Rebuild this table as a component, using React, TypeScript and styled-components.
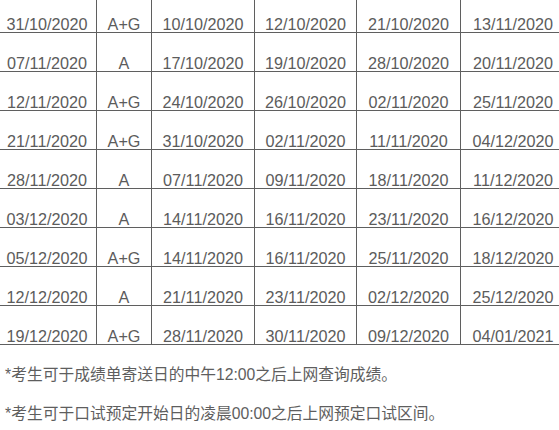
import React from "react";
import styled, { createGlobalStyle } from "styled-components";

const Global = createGlobalStyle`
  html, body { margin: 0; padding: 0; background: #fff; }
  body { width: 559px; height: 430px; overflow: hidden; }
`;

const Page = styled.div`
  width: 559px;
  height: 430px;
  overflow: hidden;
  background: #fff;
  font-family: "Liberation Sans", Arial, "Noto Sans CJK SC", sans-serif;
`;

const Grid = styled.div`
  display: grid;
  grid-template-columns: 99px 55px 103px 102px 104px 105px;
  margin: -7px 0 0 -3px;
  width: max-content;
  border-top: 1px solid #5f5f5f;
  border-left: 1px solid #5f5f5f;
`;

const Cell = styled.div`
  box-sizing: border-box;
  height: 39px;
  border-right: 1px solid #5f5f5f;
  border-bottom: 1px solid #5f5f5f;
  display: flex;
  align-items: flex-end;
  justify-content: center;
  font-size: 16.2px;
  line-height: 16px;
  color: #5c5c5c;
  white-space: nowrap;
`;

const Notes = styled.div`
  padding: 10px 0 0 5px;
`;

const Note = styled.p`
  margin: 0;
  font-size: 15.75px;
  line-height: 39px;
  color: #5e5e5e;
  white-space: nowrap;
  font-family: "Liberation Sans", Arial, "Noto Sans CJK SC", sans-serif;
`;

const rows: string[][] = [
  ["31/10/2020", "A+G", "10/10/2020", "12/10/2020", "21/10/2020", "13/11/2020"],
  ["07/11/2020", "A", "17/10/2020", "19/10/2020", "28/10/2020", "20/11/2020"],
  ["12/11/2020", "A+G", "24/10/2020", "26/10/2020", "02/11/2020", "25/11/2020"],
  ["21/11/2020", "A+G", "31/10/2020", "02/11/2020", "11/11/2020", "04/12/2020"],
  ["28/11/2020", "A", "07/11/2020", "09/11/2020", "18/11/2020", "11/12/2020"],
  ["03/12/2020", "A", "14/11/2020", "16/11/2020", "23/11/2020", "16/12/2020"],
  ["05/12/2020", "A+G", "14/11/2020", "16/11/2020", "25/11/2020", "18/12/2020"],
  ["12/12/2020", "A", "21/11/2020", "23/11/2020", "02/12/2020", "25/12/2020"],
  ["19/12/2020", "A+G", "28/11/2020", "30/11/2020", "09/12/2020", "04/01/2021"],
];

export default function App() {
  return (
    <Page>
      <Global />
      <Grid>
        {rows.map((r, i) =>
          r.map((c, j) => <Cell key={`${i}-${j}`}>{c}</Cell>)
        )}
      </Grid>
      <Notes>
        <Note>*考生可于成绩单寄送日的中午12:00之后上网查询成绩。</Note>
        <Note>*考生可于口试预定开始日的凌晨00:00之后上网预定口试区间。</Note>
      </Notes>
    </Page>
  );
}
